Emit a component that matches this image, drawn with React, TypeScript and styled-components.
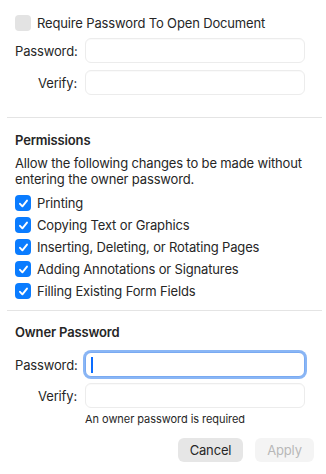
import React from "react"
import styled, { createGlobalStyle } from "styled-components"

const GlobalStyle = createGlobalStyle`
  html, body {
    margin: 0;
    padding: 0;
    background: #ffffff;
  }
  body {
    font-family: Inter, "Noto Sans", "Liberation Sans", sans-serif;
    font-size: 13px;
    letter-spacing: -0.15px;
    color: #262626;
    -webkit-font-smoothing: antialiased;
  }
`

const Sheet = styled.div`
  width: 326px;
  height: 474px;
  display: flex;
  flex-direction: column;
  background: #ffffff;
  overflow: hidden;
`

const Section = styled.div<{ $top: number }>`
  display: flex;
  flex-direction: column;
  padding: ${(p) => p.$top}px 0 0 15px;
`

const Separator = styled.div<{ $top: number }>`
  height: 1px;
  background: #e4e4e4;
  margin: ${(p) => p.$top}px 4px 0 7px;
`

const CheckRow = styled.label`
  display: flex;
  align-items: center;
  gap: 6px;
  height: 22px;
  line-height: 16px;
  cursor: default;
`

const Box = styled.span<{ $on?: boolean }>`
  width: 16px;
  height: 16px;
  border-radius: 4px;
  display: flex;
  align-items: center;
  justify-content: center;
  background: ${(p) => (p.$on ? "#0a7cff" : "#e3e3e3")};
  flex-shrink: 0;
`

const Title = styled.div<{ $top: number }>`
  font-weight: 600;
  line-height: 16px;
  margin-top: ${(p) => p.$top}px;
`

const Description = styled.div`
  line-height: 16px;
  margin-top: 7px;
  margin-bottom: 5px;
  padding-right: 12px;
`

const Form = styled.div<{ $top: number; $gap: number }>`
  display: grid;
  grid-template-columns: 62px 220px;
  column-gap: 8px;
  row-gap: ${(p) => p.$gap}px;
  align-items: center;
  margin-top: ${(p) => p.$top}px;
`

const Label = styled.div`
  text-align: right;
  line-height: 16px;
`

const Field = styled.div<{ $focus?: boolean }>`
  height: 25px;
  box-sizing: border-box;
  border-radius: 6px;
  border: 1px solid ${(p) => (p.$focus ? "#79aaf2" : "#ececec")};
  box-shadow: ${(p) =>
    p.$focus ? "0 0 0 2px #8ab6f5" : "inset 0 1px 0 rgba(0,0,0,0.02)"};
  background: #ffffff;
  display: flex;
  align-items: center;
  padding-left: 5px;
`

const Caret = styled.span`
  width: 2px;
  height: 16px;
  background: #0a6cff;
`

const Hint = styled.div`
  font-size: 11px;
  line-height: 14px;
  letter-spacing: -0.05px;
  margin: 4px 0 0 70px;
  color: #262626;
`

const Actions = styled.div`
  display: flex;
  justify-content: flex-end;
  gap: 12px;
  margin-top: 12px;
  padding-right: 12px;
`

const Button = styled.button<{ $disabled?: boolean; $w: number }>`
  width: ${(p) => p.$w}px;
  height: 24px;
  border: none;
  border-radius: 6px;
  font-family: inherit;
  font-size: 13px;
  letter-spacing: inherit;
  background: ${(p) => (p.$disabled ? "#f4f4f4" : "#e6e6e6")};
  color: ${(p) => (p.$disabled ? "#b8b8b8" : "#262626")};
  padding: 0;
`

const Check = () => (
  <svg width="11" height="11" viewBox="0 0 11 11">
    <path
      d="M2 5.8 L4.4 8.3 L9 2.6"
      fill="none"
      stroke="#ffffff"
      strokeWidth="1.9"
      strokeLinecap="round"
      strokeLinejoin="round"
    />
  </svg>
)

const permissions = [
  "Printing",
  "Copying Text or Graphics",
  "Inserting, Deleting, or Rotating Pages",
  "Adding Annotations or Signatures",
  "Filling Existing Form Fields",
]

export default function App() {
  return (
    <>
      <GlobalStyle />
      <Sheet>
        <Section $top={12}>
          <CheckRow>
            <Box />
            Require Password To Open Document
          </CheckRow>
          <Form $top={4} $gap={7}>
            <Label>Password:</Label>
            <Field />
            <Label>Verify:</Label>
            <Field />
          </Form>
        </Section>
        <Separator $top={22} />
        <Section $top={0}>
          <Title $top={14}>Permissions</Title>
          <Description>
            Allow the following changes to be made without entering the owner
            password.
          </Description>
          {permissions.map((p) => (
            <CheckRow key={p}>
              <Box $on>
                <Check />
              </Box>
              {p}
            </CheckRow>
          ))}
        </Section>
        <Separator $top={8} />
        <Section $top={0}>
          <Title $top={13}>Owner Password</Title>
          <Form $top={12} $gap={6}>
            <Label>Password:</Label>
            <Field $focus>
              <Caret />
            </Field>
            <Label>Verify:</Label>
            <Field />
          </Form>
          <Hint>An owner password is required</Hint>
          <Actions>
            <Button $w={65}>Cancel</Button>
            <Button $w={59} $disabled>
              Apply
            </Button>
          </Actions>
        </Section>
      </Sheet>
    </>
  )
}
